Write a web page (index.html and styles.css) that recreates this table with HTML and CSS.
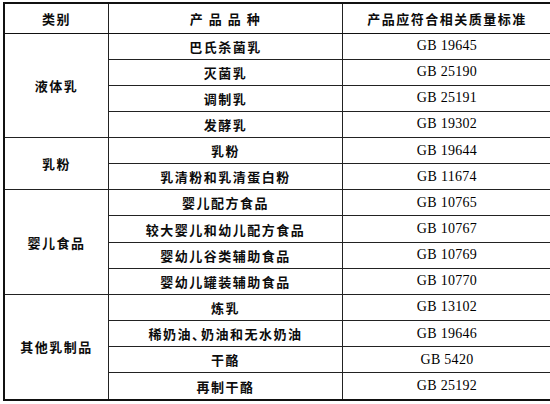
FILE: index.html
```html
<!DOCTYPE html>
<html lang="zh">
<head>
<meta charset="utf-8">
<link rel="stylesheet" href="styles.css">
</head>
<body>
<table class="std">
  <thead>
    <tr class="head">
      <th class="c1">类别</th>
      <th class="c2">产 品 品 种</th>
      <th class="c3">产品应符合相关质量标准</th>
    </tr>
  </thead>
  <tbody>
    <tr><td class="cat" rowspan="4">液体乳</td><td class="name">巴氏杀菌乳</td><td class="gb">GB 19645</td></tr>
    <tr><td class="name">灭菌乳</td><td class="gb">GB 25190</td></tr>
    <tr><td class="name">调制乳</td><td class="gb">GB 25191</td></tr>
    <tr><td class="name">发酵乳</td><td class="gb">GB 19302</td></tr>
    <tr><td class="cat" rowspan="2">乳粉</td><td class="name">乳粉</td><td class="gb">GB 19644</td></tr>
    <tr><td class="name">乳清粉和乳清蛋白粉</td><td class="gb">GB 11674</td></tr>
    <tr><td class="cat" rowspan="4">婴儿食品</td><td class="name">婴儿配方食品</td><td class="gb">GB 10765</td></tr>
    <tr><td class="name">较大婴儿和幼儿配方食品</td><td class="gb">GB 10767</td></tr>
    <tr><td class="name">婴幼儿谷类辅助食品</td><td class="gb">GB 10769</td></tr>
    <tr><td class="name">婴幼儿罐装辅助食品</td><td class="gb">GB 10770</td></tr>
    <tr><td class="cat" rowspan="4">其他乳制品</td><td class="name">炼乳</td><td class="gb">GB 13102</td></tr>
    <tr><td class="name">稀奶油<span class="dun">、</span>奶油和无水奶油</td><td class="gb">GB 19646</td></tr>
    <tr><td class="name">干酪</td><td class="gb">GB 5420</td></tr>
    <tr><td class="name">再制干酪</td><td class="gb">GB 25192</td></tr>
  </tbody>
</table>
</body>
</html>
```
FILE: styles.css
```css
html, body {
  margin: 0;
  padding: 0;
  background: #fff;
}
body {
  padding: 2px 0 0 3px;
}
.std {
  border-collapse: collapse;
  width: 544px;
  height: 399px;
  table-layout: fixed;
  border: 2px solid #111;
  color: #0c0c0c;
  font-family: "Noto Sans CJK SC", "Liberation Sans", sans-serif;
  font-weight: 700;
  font-size: 13px;
}
.std th, .std td {
  border: 1px solid #222;
  padding: 0;
  text-align: center;
  vertical-align: middle;
  line-height: 1;
}
.c1 { width: 103px; }
.c2 { width: 233px; }
.c3 { width: 208px; }
.head { height: 30px; }
.head th {
  font-weight: 700;
  letter-spacing: 1.5px;
  border-bottom: 1px solid #111;
}
.cat {
  letter-spacing: 1.5px;
}
.name {
  letter-spacing: 1.5px;
}
.dun {
  letter-spacing: -4px;
}
.gb {
  font-family: "Liberation Serif", serif;
  font-weight: 400;
  font-size: 14px;
  letter-spacing: 0.3px;
  color: #000;
}
```
